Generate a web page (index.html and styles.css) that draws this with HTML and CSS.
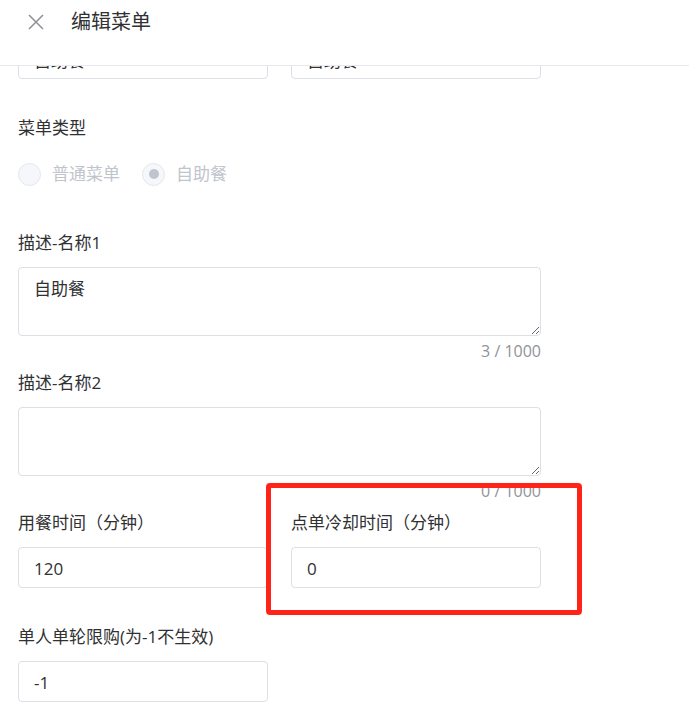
FILE: index.html
```html
<!DOCTYPE html>
<html lang="zh-CN">
<head>
    <meta charset="UTF-8">
    <meta name="viewport" content="width=device-width, initial-scale=1.0">
    <title>编辑菜单</title>
    <link rel="stylesheet" href="styles.css">
</head>
<body>
    <div class="drawer">
        <header class="drawer-header">
            <button class="close-btn" type="button" aria-label="关闭">
                <svg viewBox="0 0 16 16" width="16" height="16">
                    <path d="M1 1 L15 15 M15 1 L1 15" stroke="currentColor" stroke-width="1.6" fill="none"/>
                </svg>
            </button>
            <span class="drawer-title">编辑菜单</span>
        </header>

        <div class="drawer-body" id="drawerBody">
            <form class="menu-form">
                <div class="form-row">
                    <div class="form-item">
                        <label>菜单名称</label>
                        <div class="input-wrap">
                            <input class="input" type="text" value="自助餐">
                            <span class="input-count">3 / 30</span>
                        </div>
                    </div>
                    <div class="form-item">
                        <label>菜单名称(英文)</label>
                        <div class="input-wrap">
                            <input class="input" type="text" value="自助餐">
                            <span class="input-count">3 / 30</span>
                        </div>
                    </div>
                </div>

                <div class="form-item radio-item">
                    <label>菜单类型</label>
                    <div class="radio-group">
                        <span class="radio is-disabled">
                            <span class="radio-inner"></span>
                            <span class="radio-label">普通菜单</span>
                        </span>
                        <span class="radio is-disabled is-checked">
                            <span class="radio-inner"></span>
                            <span class="radio-label">自助餐</span>
                        </span>
                    </div>
                </div>

                <div class="form-item textarea-item">
                    <label>描述-名称1</label>
                    <textarea class="textarea">自助餐</textarea>
                    <div class="word-count">3 / 1000</div>
                </div>

                <div class="form-item textarea-item">
                    <label>描述-名称2</label>
                    <textarea class="textarea"></textarea>
                    <div class="word-count">0 / 1000</div>
                </div>

                <div class="form-row">
                    <div class="form-item">
                        <label>用餐时间（分钟）</label>
                        <input class="input" type="text" value="120">
                    </div>
                    <div class="form-item marked">
                        <label>点单冷却时间（分钟）</label>
                        <input class="input" type="text" value="0">
                    </div>
                </div>

                <div class="form-row">
                    <div class="form-item">
                        <label>单人单轮限购(为-1不生效)</label>
                        <input class="input" type="text" value="-1">
                    </div>
                </div>

                <div class="form-row">
                    <div class="form-item">
                        <label>排序</label>
                        <input class="input" type="text" value="0">
                    </div>
                </div>
            </form>
        </div>
    </div>

    <script>
        document.getElementById('drawerBody').scrollTop = 84;
    </script>
</body>
</html>
```

FILE: styles.css
```css
* {
    margin: 0;
    padding: 0;
    box-sizing: border-box;
}

body {
    font-family: "Open Sans", "Noto Sans CJK SC", sans-serif;
    color: #303133;
    background: #fff;
}

.drawer {
    height: 100vh;
    display: flex;
    flex-direction: column;
    position: relative;
}

.drawer-header {
    height: 66px;
    flex-shrink: 0;
    display: flex;
    align-items: flex-start;
    padding: 10px 0 0 28px;
    border-bottom: 1px solid #e9e9eb;
    background: #fff;
}

.close-btn {
    border: none;
    background: none;
    color: #909399;
    width: 16px;
    height: 24px;
    display: flex;
    align-items: center;
    cursor: pointer;
}

.drawer-title {
    margin-left: 27px;
    font-size: 20px;
    line-height: 24px;
    color: #303133;
}

.drawer-body {
    flex: 1;
    overflow-y: auto;
    padding: 20px 18px 40px;
    scrollbar-width: none;
}

.drawer-body::-webkit-scrollbar {
    display: none;
}

.menu-form {
    width: 523px;
}

.form-row {
    display: grid;
    grid-template-columns: 250px 250px;
    gap: 23px;
}

.form-item {
    margin-bottom: 37px;
}

.form-item label {
    display: block;
    font-size: 17px;
    line-height: 24px;
    color: #303133;
    margin-bottom: 12px;
}

.input-wrap {
    position: relative;
}

.input {
    display: block;
    width: 100%;
    height: 41px;
    border: 1px solid #dcdfe6;
    border-radius: 4px;
    padding: 2px 15px 0;
    font-family: inherit;
    font-size: 17px;
    color: #303133;
    outline: none;
}

.input-wrap .input {
    padding-right: 70px;
}

.input-count {
    position: absolute;
    right: 18px;
    top: 10px;
    font-size: 16px;
    line-height: 22px;
    color: #909399;
}

.radio-item {
    margin-bottom: 35px;
}

.radio-group {
    height: 44px;
    display: flex;
    align-items: center;
    gap: 22px;
}

.radio {
    display: flex;
    align-items: center;
    cursor: not-allowed;
}

.radio-inner {
    width: 23px;
    height: 23px;
    border-radius: 50%;
    border: 1px solid #e4e7ed;
    background: #f5f7fa;
    display: flex;
    align-items: center;
    justify-content: center;
}

.radio.is-checked .radio-inner::after {
    content: '';
    width: 10px;
    height: 10px;
    border-radius: 50%;
    background: #c0c4cc;
}

.radio-label {
    margin-left: 11px;
    font-size: 17px;
    line-height: 24px;
    color: #c0c4cc;
}

.textarea-item {
    margin-bottom: 10px;
}

.textarea {
    display: block;
    width: 100%;
    height: 69px;
    border: 1px solid #dcdfe6;
    border-radius: 4px;
    padding: 9px 15px;
    font-family: inherit;
    font-size: 17px;
    line-height: 24px;
    color: #303133;
    outline: none;
}

.word-count {
    margin-top: 5px;
    text-align: right;
    font-size: 16px;
    line-height: 20px;
    color: #909399;
}

/* red frame around the cooldown field */
.form-item.marked {
    position: relative;
}

.form-item.marked::after {
    content: '';
    position: absolute;
    left: -25px;
    top: -28px;
    right: -41px;
    bottom: -27px;
    border: 5px solid #ff2318;
    border-radius: 4px;
    pointer-events: none;
}
```
